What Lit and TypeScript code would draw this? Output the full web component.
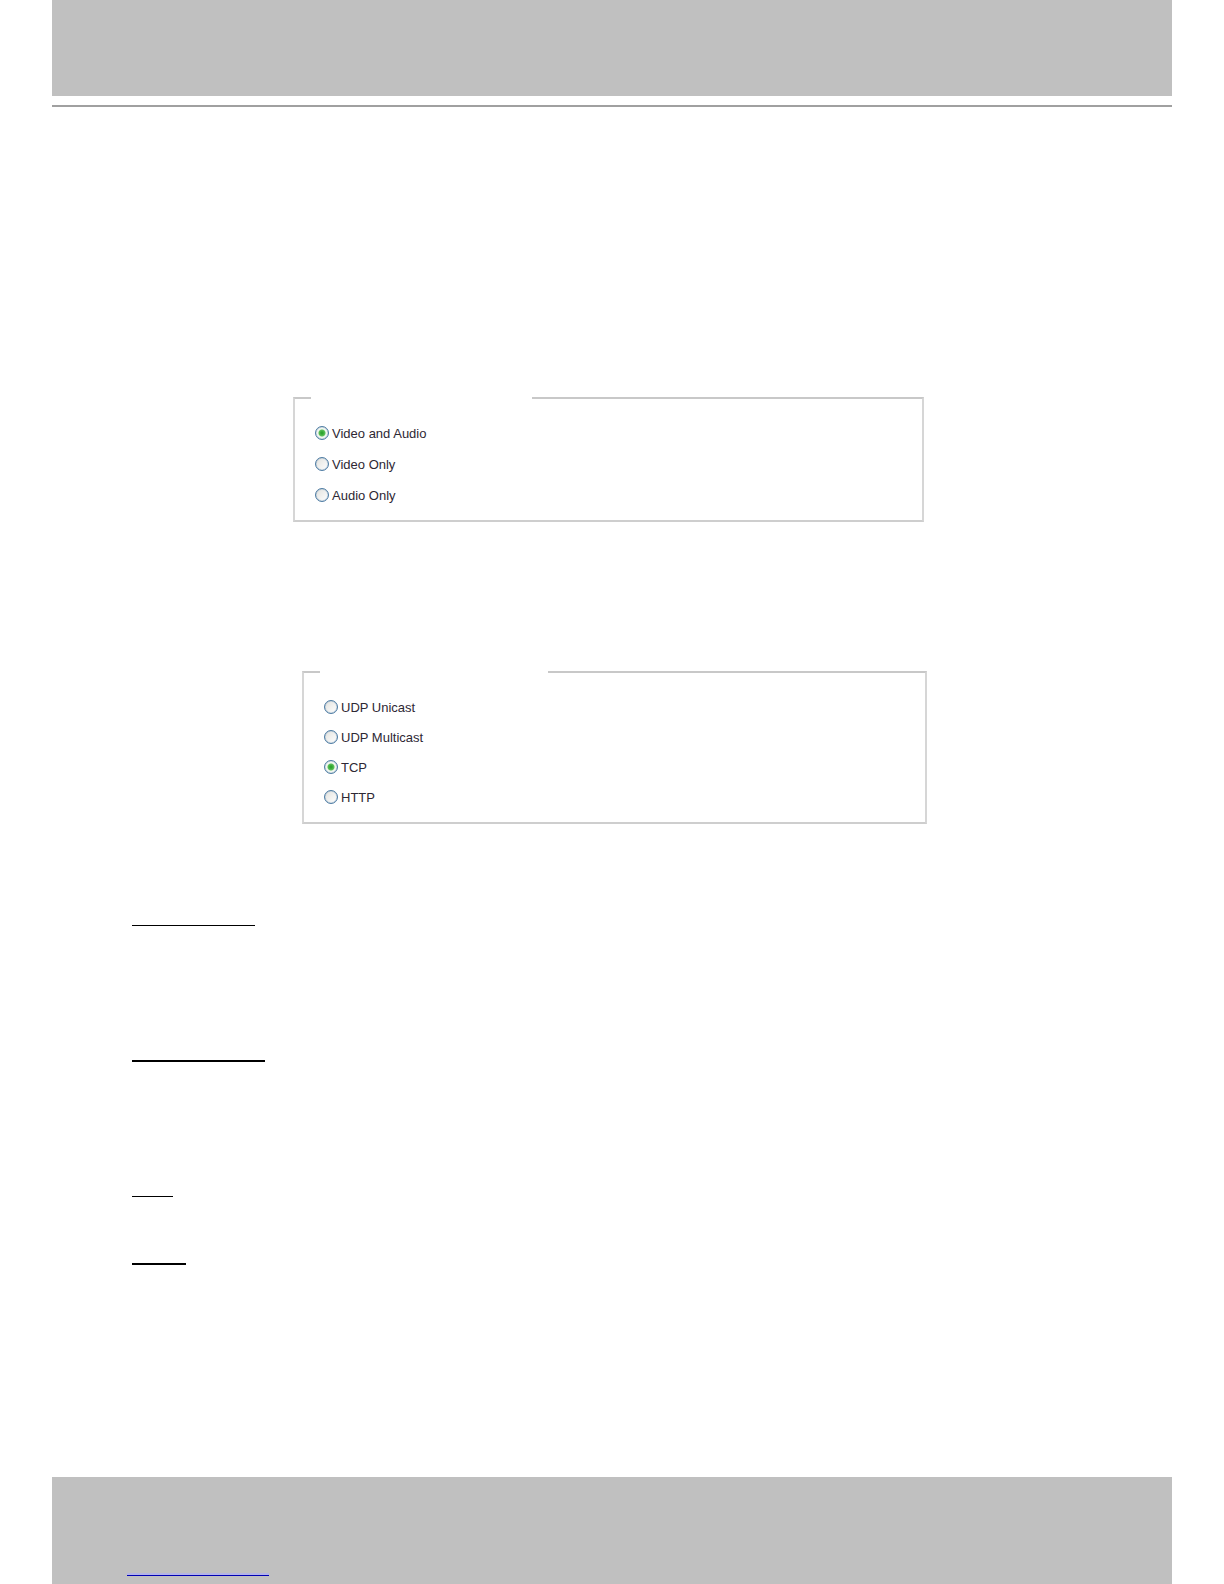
import { LitElement, html, css } from "lit";
import { customElement, property } from "lit/decorators.js";
import { classMap } from "lit/directives/class-map.js";

@customElement("option-group")
class OptionGroup extends LitElement {
  @property() name = "";
  @property() value = "";
  @property({ type: Array }) options: string[] = [];
  @property({ type: Boolean, reflect: true }) wide = false;

  static styles = css`
    :host {
      display: block;
      font: 13px/16px "Liberation Sans", Arial, sans-serif;
      color: #2e2834;
    }
    .group {
      margin: 0;
      min-width: 0;
      border: 2px solid #d6d6d6;
      border-top-color: #c8c8c8;
      border-bottom-color: #cecece;
      padding: 27px 20px 16px;
    }
    .gap {
      width: 221px;
      height: 2px;
      padding: 0;
      margin-left: -4px;
    }
    :host([wide]) .gap {
      width: 228px;
    }
    .list {
      display: flex;
      flex-direction: column;
      gap: 15px;
    }
    :host([wide]) .list {
      gap: 14px;
    }
    .option {
      display: flex;
      align-items: center;
      gap: 3px;
    }
    .radio {
      appearance: none;
      box-sizing: border-box;
      flex: none;
      width: 14px;
      height: 14px;
      margin: 0 0 2px;
      border: 1px solid #4d7ba3;
      border-radius: 50%;
      background: linear-gradient(135deg, #e2e2de, #ffffff);
      box-shadow: inset 0 0 1px #4d7ba3;
    }
    .radio:checked {
      background: radial-gradient(circle, #2fa52f 0 1px, #5cc05a 3px, #f4f8f2 4px);
    }
  `;

  render() {
    return html`
      <fieldset class="group">
        <legend class="gap"></legend>
        <div class="list">
          ${this.options.map(
            (option) => html`
              <label class="option">
                <input
                  class="radio"
                  type="radio"
                  name=${this.name}
                  .checked=${option === this.value}
                  @change=${() => (this.value = option)}
                />
                <span>${option}</span>
              </label>
            `
          )}
        </div>
      </fieldset>
    `;
  }
}

@customElement("app-root")
class AppRoot extends LitElement {
  static styles = css`
    :host {
      display: block;
      background: #ffffff;
    }
    .page {
      box-sizing: border-box;
      display: flex;
      flex-direction: column;
      min-height: 100vh;
      padding: 0 52px;
    }
    .header {
      height: 96px;
      background: #c0c0c0;
    }
    .divider {
      margin-top: 9px;
      height: 2px;
      background: #a0a0a0;
    }
    .content {
      display: flex;
      flex-direction: column;
      padding: 290px 80px 0;
    }
    .media {
      margin: 0 168px 0 161px;
    }
    .protocol {
      margin: 149px 165px 0 170px;
    }
    .rules {
      display: flex;
      flex-direction: column;
      margin-top: 101px;
    }
    .rule {
      height: 1px;
      background: #000000;
    }
    .heavy {
      height: 2px;
    }
    .unicast {
      width: 123px;
    }
    .multicast {
      width: 133px;
      margin-top: 134px;
    }
    .tcp {
      width: 41px;
      margin-top: 134px;
    }
    .http {
      width: 54px;
      margin-top: 66px;
    }
    .footer {
      box-sizing: border-box;
      display: flex;
      align-items: flex-end;
      height: 107px;
      margin-top: auto;
      padding: 0 75px 8px;
      background: #c0c0c0;
    }
    .link {
      width: 142px;
      height: 2px;
      background: #b4b4e6;
      border-bottom: 1px solid #0000b4;
    }
  `;

  private rules = ["unicast", "multicast", "tcp", "http"];

  render() {
    return html`
      <div class="page">
        <header class="header"></header>
        <div class="divider"></div>
        <main class="content">
          <option-group
            class="media"
            name="media"
            value="Video and Audio"
            .options=${["Video and Audio", "Video Only", "Audio Only"]}
          ></option-group>
          <option-group
            class="protocol"
            wide
            name="protocol"
            value="TCP"
            .options=${["UDP Unicast", "UDP Multicast", "TCP", "HTTP"]}
          ></option-group>
          <div class="rules">
            ${this.rules.map(
              (rule, i) =>
                html`<div class=${classMap({ rule: true, heavy: i % 2 === 1, [rule]: true })}></div>`
            )}
          </div>
        </main>
        <footer class="footer"><a class="link" href="#"></a></footer>
      </div>
    `;
  }
}
